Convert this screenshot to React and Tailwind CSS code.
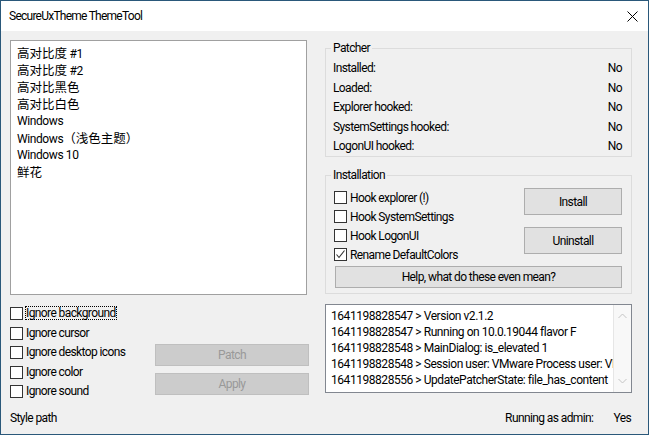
import React from 'react';

const themes = [
  '高对比度 #1',
  '高对比度 #2',
  '高对比黑色',
  '高对比白色',
  'Windows',
  'Windows（浅色主题）',
  'Windows 10',
  '鲜花',
];

const ignoreRows = [
  { label: 'Ignore background', h: 'h-[20px]', focused: true },
  { label: 'Ignore cursor', h: 'h-[19px]' },
  { label: 'Ignore desktop icons', h: 'h-[20px]' },
  { label: 'Ignore color', h: 'h-[19px]' },
  { label: 'Ignore sound', h: 'h-[20px]' },
];

const patcherRows = [
  { label: 'Installed:', h: 'h-[20px]' },
  { label: 'Loaded:', h: 'h-[19px]' },
  { label: 'Explorer hooked:', h: 'h-[20px]' },
  { label: 'SystemSettings hooked:', h: 'h-[19px]' },
  { label: 'LogonUI hooked:', h: 'h-[20px]' },
];

const hookRows = [
  { label: 'Hook explorer (!)' },
  { label: 'Hook SystemSettings' },
  { label: 'Hook LogonUI' },
  { label: 'Rename DefaultColors', checked: true },
];

const logLines = [
  '1641198828547 > Version v2.1.2',
  '1641198828547 > Running on 10.0.19044 flavor F',
  '1641198828548 > MainDialog: is_elevated 1',
  '1641198828548 > Session user: VMware Process user: VMware',
  '1641198828556 > UpdatePatcherState: file_has_content',
];

// CJK runs get their own size so the Latin tracking doesn't squeeze them
const ThemeName = ({ text }) =>
  text.split(/([\u3000-\u9fff\uff00-\uffef]+)/).map((part, i) =>
    /[\u3000-\u9fff\uff00-\uffef]/.test(part) ? (
      <span key={i} className="text-[12.5px] tracking-normal">
        {part}
      </span>
    ) : (
      <span key={i}>{part}</span>
    )
  );

const Check = ({ label, checked, focused }) => (
  <div className="flex items-center">
    <span className="w-[13px] h-[13px] shrink-0 border border-[#333333] bg-white flex items-center justify-center">
      {checked && (
        <svg width="11" height="11" viewBox="0 0 11 11">
          <path d="M1.5 5.5 L4 8.5 L9.5 1.5" fill="none" stroke="#333333" strokeWidth="1.1" />
        </svg>
      )}
    </span>
    <span
      className={`ml-[2px] border leading-[12px] whitespace-nowrap ${
        focused ? 'border-dotted border-black' : 'border-transparent'
      }`}
    >
      {label}
    </span>
  </div>
);

const Button = ({ children, disabled, className }) => (
  <div
    className={`flex items-center justify-center border ${
      disabled
        ? 'bg-[#cccccc] border-[#bfbfbf] text-[#999999]'
        : 'bg-[#e1e1e1] border-[#adadad] text-black'
    } ${className}`}
  >
    {children}
  </div>
);

export default function App() {
  return (
    <div className="w-[649px] h-[435px] border border-[#2a587a] bg-[#f0f0f0] flex flex-col text-[12px] text-black tracking-[-0.6px] font-['Roboto','Noto_Sans_CJK_SC',sans-serif]">
      {/* Title bar */}
      <div className="h-[30px] shrink-0 bg-white flex items-center justify-between pl-[8px] pr-[10px]">
        <span className="text-[12px] tracking-[-0.75px]">SecureUxTheme ThemeTool</span>
        <svg width="11" height="11" viewBox="0 0 11 11" className="mt-[1px]">
          <path d="M0.5 0.5 L10.5 10.5 M10.5 0.5 L0.5 10.5" stroke="#000" strokeWidth="1" />
        </svg>
      </div>

      {/* Body */}
      <div className="h-[369px] shrink-0 flex pl-[9px] pt-[9px]">
        {/* Left column */}
        <div className="w-[299px] shrink-0 flex flex-col">
          <div className="w-[297px] h-[255px] shrink-0 bg-white border border-[#a0a0a0] pt-[4px] pl-[6px] tracking-[-0.4px]">
            {themes.map((t) => (
              <div key={t} className="h-[17px] leading-[17px] whitespace-nowrap">
                <ThemeName text={t} />
              </div>
            ))}
          </div>

          <div className="flex mt-[11px] shrink-0">
            <div className="w-[145px] flex flex-col">
              {ignoreRows.map((r) => (
                <div key={r.label} className={`${r.h} flex items-start`}>
                  <Check label={r.label} focused={r.focused} />
                </div>
              ))}
            </div>
            <div className="w-[154px] flex flex-col mt-[38px] gap-[7px]">
              <Button disabled className="h-[22px]">Patch</Button>
              <Button disabled className="h-[22px]">Apply</Button>
            </div>
          </div>
        </div>

        {/* Right column */}
        <div className="w-[307px] shrink-0 ml-[16px] flex flex-col">
          <fieldset className="shrink-0 border border-[#dcdcdc] pl-[7px] pr-[9px]">
            <legend className="px-[2px] -ml-[2px] h-[16px] leading-[16px]">Patcher</legend>
            <div className="pt-[2px]">
              {patcherRows.map((r) => (
                <div key={r.label} className={`${r.h} flex items-center justify-between`}>
                  <span>{r.label}</span>
                  <span>No</span>
                </div>
              ))}
            </div>
          </fieldset>

          <fieldset className="shrink-0 mt-[10px] border border-[#dcdcdc] pl-[8px] pr-[9px] pb-[5px]">
            <legend className="px-[2px] -ml-[3px] h-[16px] leading-[16px]">Installation</legend>
            <div className="flex justify-between pt-[5px]">
              <div className="flex flex-col">
                {hookRows.map((r) => (
                  <div key={r.label} className="h-[19px] flex items-center">
                    <Check label={r.label} checked={r.checked} />
                  </div>
                ))}
              </div>
              <div className="w-[98px] flex flex-col gap-[12px]">
                <Button className="h-[27px]">Install</Button>
                <Button className="h-[27px]">Uninstall</Button>
              </div>
            </div>
            <Button className="h-[22px] mt-[2px] ml-[1px]">Help, what do these even mean?</Button>
          </fieldset>

          <div className="shrink-0 mt-[10px] h-[89px] border border-[#828790] bg-white flex">
            <div className="flex-1 overflow-hidden pl-[5px] pt-[3px] tracking-[-0.45px]">
              {logLines.map((l, i) => (
                <div key={i} className="h-[16px] leading-[16px] whitespace-nowrap">
                  {l}
                </div>
              ))}
            </div>
            <div className="w-[18px] shrink-0 border-l border-[#e6e6e6] bg-[#f8f8f8] flex flex-col items-center justify-between py-[8px]">
              <svg width="9" height="6" viewBox="0 0 9 6">
                <path d="M0.5 5 L4.5 1 L8.5 5" fill="none" stroke="#c4c4c4" strokeWidth="1" />
              </svg>
              <svg width="9" height="6" viewBox="0 0 9 6">
                <path d="M0.5 1 L4.5 5 L8.5 1" fill="none" stroke="#c4c4c4" strokeWidth="1" />
              </svg>
            </div>
          </div>
        </div>
      </div>

      {/* Status row */}
      <div className="flex-1 flex items-center pl-[9px] pr-[17px] pt-[1px]">
        <span>Style path</span>
        <span className="ml-auto">Running as admin:</span>
        <span className="ml-[20px]">Yes</span>
      </div>
    </div>
  );
}
